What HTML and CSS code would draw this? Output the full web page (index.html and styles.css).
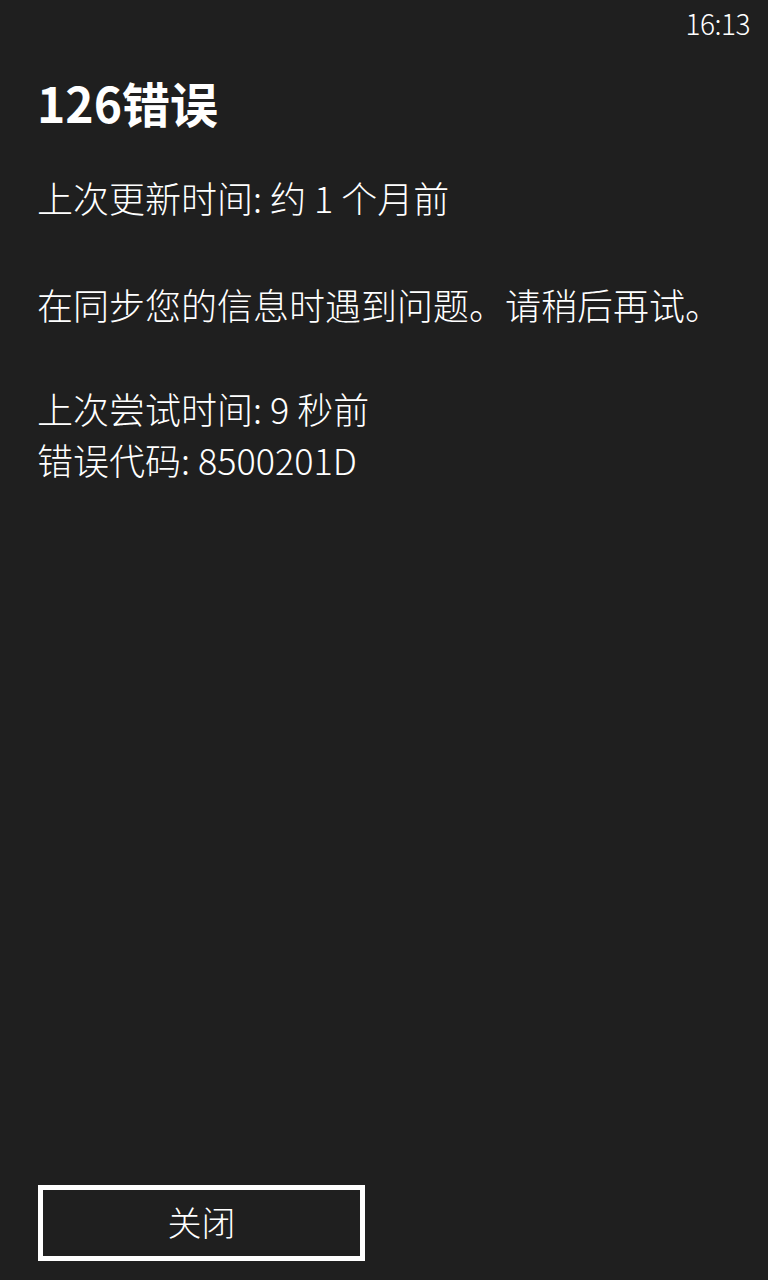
FILE: index.html
```html
<!DOCTYPE html>
<html lang="zh-CN">
<head>
<meta charset="utf-8">
<title>126错误</title>
<link rel="stylesheet" href="styles.css">
</head>
<body>
<div class="screen">
  <div class="status-bar"><span class="clock">16:13</span></div>
  <main class="content">
    <h1 class="title">126错误</h1>
    <p class="line first">上次更新时间: 约 1 个月前</p>
    <p class="line message">在同步您的信息时遇到问题。请稍后再试。</p>
    <div class="details">
      <p class="line">上次尝试时间: 9 秒前</p>
      <p class="line">错误代码: 8500201D</p>
    </div>
  </main>
  <div class="actions">
    <button class="close-btn" type="button">关闭</button>
  </div>
</div>
</body>
</html>
```
FILE: styles.css
```css
html, body {
  margin: 0;
  padding: 0;
  background: #1f1f1f;
}
body {
  color: #ffffff;
  font-family: "Noto Sans CJK SC", "Noto Sans", sans-serif;
}
.screen {
  width: 768px;
  height: 1280px;
  display: flex;
  flex-direction: column;
  box-sizing: border-box;
  overflow: hidden;
}
.status-bar {
  height: 46px;
  display: flex;
  justify-content: flex-end;
  align-items: center;
  padding-right: 18px;
}
.clock {
  font-size: 28px;
  font-weight: 300;
  letter-spacing: -0.5px;
}
.content {
  flex: 1;
  padding-left: 37px;
  padding-right: 20px;
}
.title {
  margin: 26px 0 0 0;
  font-size: 48px;
  line-height: 60px;
  font-weight: 700;
}
.line {
  margin: 0;
  font-size: 36px;
  line-height: 51px;
  font-weight: 300;
}
.first {
  margin-top: 40px;
}
.message {
  margin-top: 56px;
}
.details {
  margin-top: 53px;
}
.actions {
  padding: 0 0 19px 38px;
}
.close-btn {
  width: 327px;
  height: 76px;
  border: 5px solid #ffffff;
  background: transparent;
  color: #ffffff;
  font-family: "Noto Sans CJK SC", sans-serif;
  font-size: 34px;
  font-weight: 300;
  padding: 0 0 4px 0;
  display: flex;
  align-items: center;
  justify-content: center;
}
```
